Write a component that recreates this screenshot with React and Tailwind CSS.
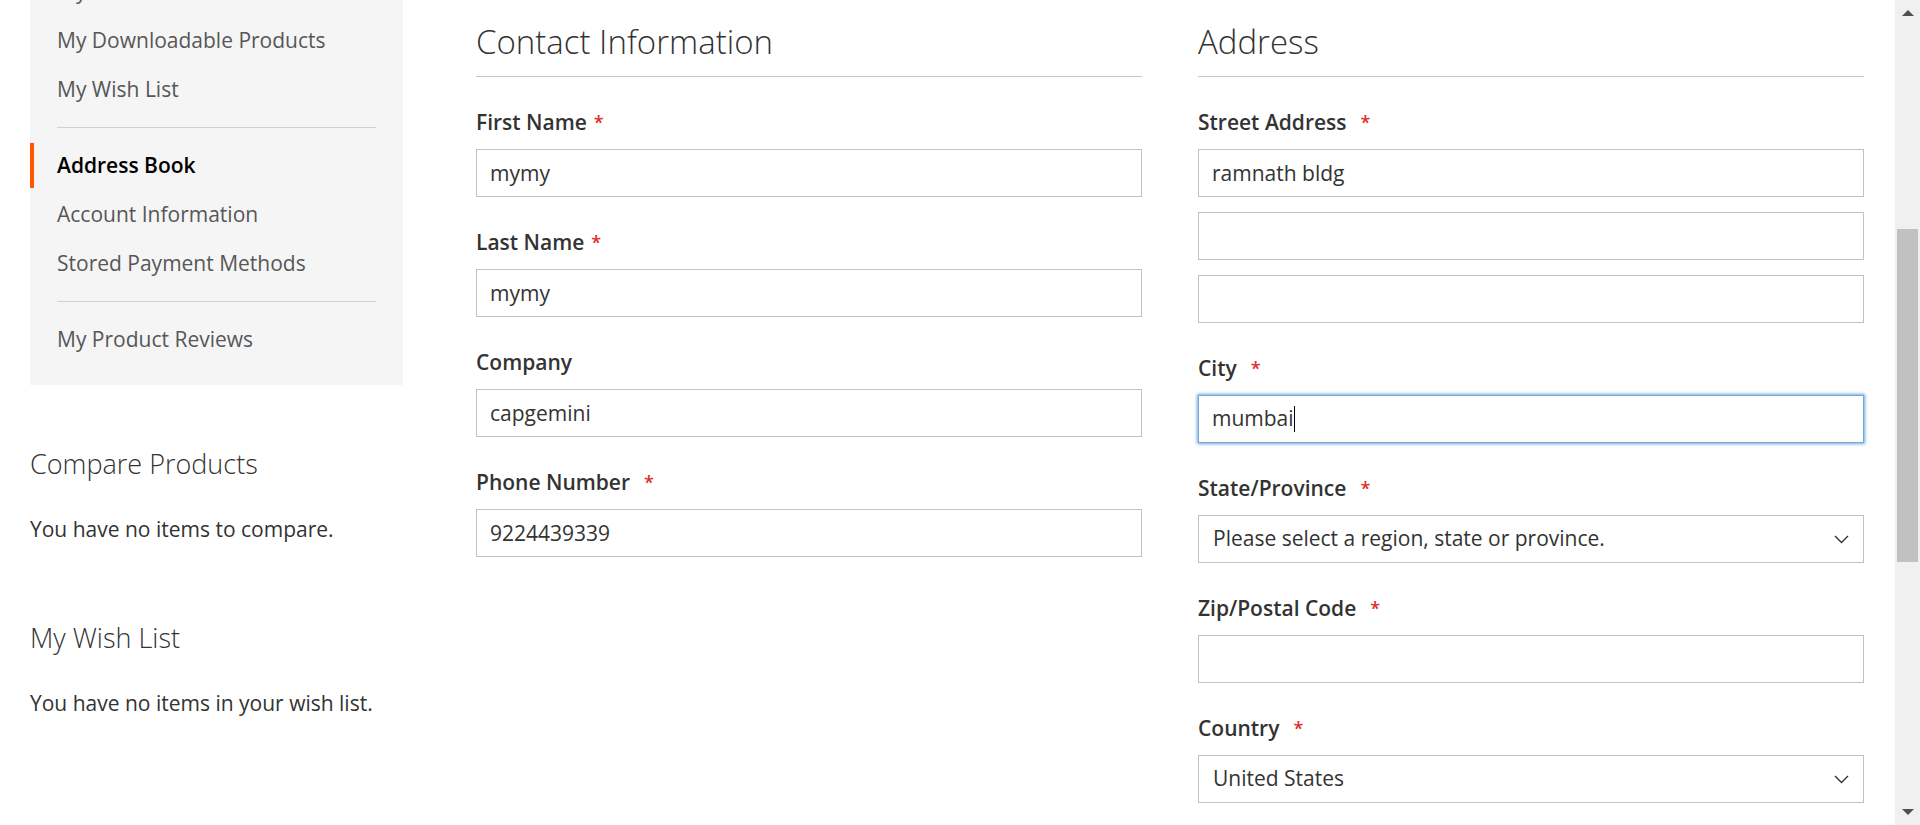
const navGroups = [
  ['My Orders', 'My Downloadable Products', 'My Wish List'],
  ['Address Book', 'Account Information', 'Stored Payment Methods'],
  ['My Product Reviews'],
];

const inputCls =
  'block w-full h-[48px] border border-[#c2c2c2] bg-white px-[13px] text-[21px] text-[#333] outline-none';

function NavItem({ label, first }) {
  const current = label === 'Address Book';
  return (
    <li
      className={`flex h-[45px] items-center text-[21px] ${first ? '' : 'mt-[4px]'} ${
        current
          ? 'border-l-[4px] border-[#ff5501] pl-[23px] font-semibold text-black'
          : 'pl-[27px] text-[#575757]'
      }`}
    >
      {label}
    </li>
  );
}

function Label({ text, required, wideStar }) {
  return (
    <label className="mb-[12px] block h-[30px] overflow-visible text-[21px] font-semibold leading-[30px] text-[#333]">
      {text}
      {required && (
        <span className={`align-top text-[18px] leading-[30px] text-[#e02b27] ${wideStar ? 'ml-[14px]' : 'ml-[7px]'}`}>
          *
        </span>
      )}
    </label>
  );
}

function Field({ label, required = true, wideStar, children }) {
  return (
    <div className="mb-[30px]">
      <Label text={label} required={required} wideStar={wideStar} />
      {children}
    </div>
  );
}

function Select({ value }) {
  return (
    <div className="flex h-[48px] items-center justify-between border border-[#c2c2c2] bg-white pl-[14px] pr-[14px] text-[21px] text-[#333]">
      <span>{value}</span>
      <svg width="15" height="9" viewBox="0 0 15 9" fill="none">
        <polyline points="1,1 7.5,7.5 14,1" stroke="#333" strokeWidth="1.4" />
      </svg>
    </div>
  );
}

function Legend({ children }) {
  return (
    <div className="mt-[24px] mb-[30px] border-b border-[#c6c6c6] pb-[16px]">
      <h2 className="text-[33px] font-light leading-[36px] text-[#333]">{children}</h2>
    </div>
  );
}

export default function App() {
  return (
    <div className="flex h-[825px] w-[1920px] overflow-hidden bg-white font-['Open_Sans',sans-serif] text-[#333]">
      <div className="flex flex-1 pl-[30px] pr-[31px]">
        {/* Sidebar */}
        <aside className="w-[373px] shrink-0">
          <ul className="mt-[-53px] bg-[#f5f5f5] pt-[22px] pb-[23px]">
            {navGroups.map((group, gi) => (
              <div key={gi}>
                {gi > 0 && <li className="mx-[27px] my-[15px] h-px bg-[#d1d1d1]" />}
                {group.map((item, i) => (
                  <NavItem key={item} label={item} first={i === 0} />
                ))}
              </div>
            ))}
          </ul>

          <div className="mt-[64px]">
            <h3 className="text-[27px] font-light leading-[30px] text-[#333]">Compare Products</h3>
            <p className="mt-[35px] text-[21px] leading-[30px]">You have no items to compare.</p>
          </div>

          <div className="mt-[79px]">
            <h3 className="text-[27px] font-light leading-[30px] text-[#333]">My Wish List</h3>
            <p className="mt-[35px] text-[21px] leading-[30px]">You have no items in your wish list.</p>
          </div>
        </aside>

        {/* Main form */}
        <main className="ml-[73px] grid flex-1 grid-cols-2 gap-x-[56px]">
          <section>
            <Legend>Contact Information</Legend>
            <Field label="First Name">
              <input className={inputCls} defaultValue="mymy" />
            </Field>
            <Field label="Last Name">
              <input className={inputCls} defaultValue="mymy" />
            </Field>
            <Field label="Company" required={false}>
              <input className={inputCls} defaultValue="capgemini" />
            </Field>
            <Field label="Phone Number" wideStar>
              <input className={inputCls} defaultValue="9224439339" />
            </Field>
          </section>

          <section>
            <Legend>Address</Legend>
            <Field label="Street Address" wideStar>
              <input className={inputCls} defaultValue="ramnath bldg" />
              <input className={`${inputCls} mt-[15px]`} />
              <input className={`${inputCls} mt-[15px]`} />
            </Field>
            <Field label="City" wideStar>
              <div className="flex h-[48px] items-center border border-[#7aa7d2] bg-white px-[13px] text-[21px] text-[#333] shadow-[0_0_3px_1px_#68a8e0]">
                <span>mumbai</span>
                <span className="h-[26px] w-px bg-black" />
              </div>
            </Field>
            <Field label="State/Province" wideStar>
              <Select value="Please select a region, state or province." />
            </Field>
            <Field label="Zip/Postal Code" wideStar>
              <input className={inputCls} />
            </Field>
            <Field label="Country" wideStar>
              <Select value="United States" />
            </Field>
          </section>
        </main>
      </div>

      {/* Scrollbar */}
      <div className="flex w-[25px] shrink-0 flex-col items-center bg-[#f0f0f0]">
        <svg className="mt-[10px]" width="12" height="6" viewBox="0 0 12 6">
          <path d="M0 6 L6 0 L12 6 Z" fill="#505050" />
        </svg>
        <div className="mt-[213px] h-[333px] w-[21px] bg-[#c1c1c1]" />
        <div className="flex-1" />
        <svg className="mb-[10px]" width="12" height="6" viewBox="0 0 12 6">
          <path d="M0 0 L12 0 L6 6 Z" fill="#505050" />
        </svg>
      </div>
    </div>
  );
}
